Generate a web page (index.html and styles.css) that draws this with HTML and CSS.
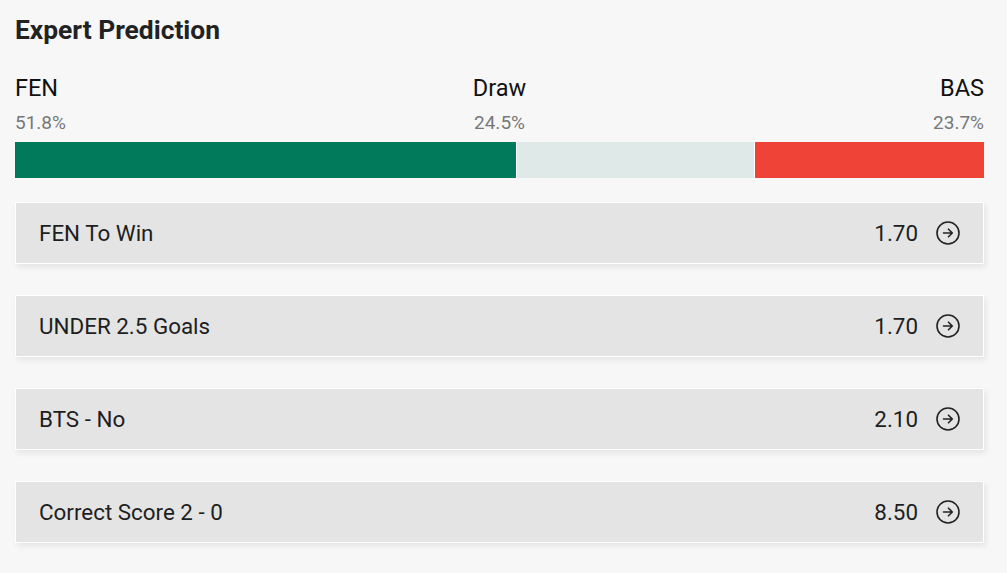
FILE: index.html
```html
<!DOCTYPE html>
<html lang="en">
<head>
<meta charset="utf-8">
<title>Expert Prediction</title>
<link rel="stylesheet" href="styles.css">
</head>
<body>
<main class="prediction">
  <h2 class="title">Expert Prediction</h2>
  <div class="outcomes">
    <div class="outcome outcome-home">
      <span class="team">FEN</span>
      <span class="pct">51.8%</span>
    </div>
    <div class="outcome outcome-draw">
      <span class="team">Draw</span>
      <span class="pct">24.5%</span>
    </div>
    <div class="outcome outcome-away">
      <span class="team">BAS</span>
      <span class="pct">23.7%</span>
    </div>
  </div>
  <div class="bar">
    <div class="seg seg-home" style="flex: 51.8"></div>
    <div class="seg seg-draw" style="flex: 24.5"></div>
    <div class="seg seg-away" style="flex: 23.7"></div>
  </div>
  <ul class="tips">
    <li class="tip"><span class="tip-name">FEN To Win</span><span class="tip-odds">1.70</span><svg class="tip-icon" viewBox="0 0 24 24" aria-hidden="true"><circle cx="12" cy="12" r="11"/><path d="M7.5 12h8.5M12.5 8.2 16.3 12l-3.8 3.8"/></svg></li>
    <li class="tip"><span class="tip-name">UNDER 2.5 Goals</span><span class="tip-odds">1.70</span><svg class="tip-icon" viewBox="0 0 24 24" aria-hidden="true"><circle cx="12" cy="12" r="11"/><path d="M7.5 12h8.5M12.5 8.2 16.3 12l-3.8 3.8"/></svg></li>
    <li class="tip"><span class="tip-name">BTS - No</span><span class="tip-odds">2.10</span><svg class="tip-icon" viewBox="0 0 24 24" aria-hidden="true"><circle cx="12" cy="12" r="11"/><path d="M7.5 12h8.5M12.5 8.2 16.3 12l-3.8 3.8"/></svg></li>
    <li class="tip"><span class="tip-name">Correct Score 2 - 0</span><span class="tip-odds">8.50</span><svg class="tip-icon" viewBox="0 0 24 24" aria-hidden="true"><circle cx="12" cy="12" r="11"/><path d="M7.5 12h8.5M12.5 8.2 16.3 12l-3.8 3.8"/></svg></li>
  </ul>
</main>
</body>
</html>
```
FILE: styles.css
```css
html, body {
  margin: 0;
  background: #f7f7f7;
}

body {
  font-family: Roboto, "Liberation Sans", Arial, sans-serif;
  color: #222;
}

.prediction {
  padding: 15px 23px 30px 15px;
}

.title {
  margin: 0;
  font-size: 26.4px;
  line-height: 30px;
  font-weight: 700;
  color: #222;
}

.outcomes {
  display: grid;
  grid-template-columns: 1fr auto 1fr;
  margin-top: 29px;
}

.outcome {
  display: flex;
  flex-direction: column;
}

.outcome-draw {
  align-items: center;
}

.outcome-away {
  align-items: flex-end;
}

.team {
  font-size: 23.5px;
  line-height: 28px;
  color: #111;
}

.pct {
  margin-top: 10px;
  font-size: 19px;
  line-height: 22px;
  color: #777;
}

.bar {
  display: flex;
  gap: 1px;
  height: 36px;
  margin-top: 8px;
  background: #fff;
}

.seg-home { background: #007a5b; }
.seg-draw { background: #dfeae8; }
.seg-away { background: #ee4336; }

.tips {
  list-style: none;
  margin: 24px 0 0;
  padding: 0;
  display: flex;
  flex-direction: column;
  gap: 31px;
}

.tip {
  display: flex;
  align-items: center;
  height: 60px;
  padding: 0 23px 0 23px;
  background: #e4e4e4;
  border: 1px solid #fff;
  box-shadow: 2px 3px 6px rgba(0, 0, 0, 0.08);
  font-size: 22.4px;
  color: #1e1e1e;
}

.tip-name {
  flex: 1;
}

.tip-odds {
  margin-right: 18px;
}

.tip-icon {
  width: 24px;
  height: 24px;
  fill: none;
  stroke: #222;
  stroke-width: 1.6;
  stroke-linecap: round;
  stroke-linejoin: round;
}
```
